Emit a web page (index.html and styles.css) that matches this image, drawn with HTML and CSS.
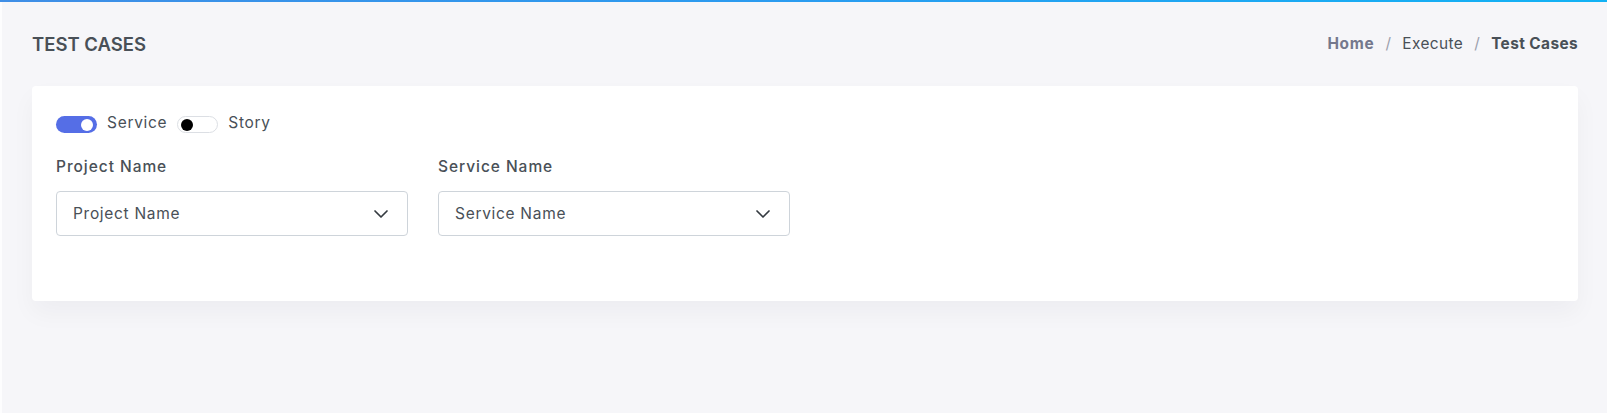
FILE: index.html
```html
<!DOCTYPE html>
<html lang="en">
<head>
<meta charset="utf-8">
<title>Test Cases</title>
<link rel="stylesheet" href="styles.css">
</head>
<body>
<div class="topbar"></div>
<div class="page">
  <div class="page-title-row">
    <h4 class="page-title">TEST CASES</h4>
    <ol class="breadcrumb">
      <li class="crumb crumb-link">Home</li>
      <li class="sep">/</li>
      <li class="crumb">Execute</li>
      <li class="sep">/</li>
      <li class="crumb crumb-active">Test Cases</li>
    </ol>
  </div>
  <div class="card">
    <div class="switch-row">
      <span class="switch switch-on"><span class="knob"></span></span>
      <span class="switch-label">Service</span>
      <span class="switch switch-off"><span class="knob"></span></span>
      <span class="switch-label">Story</span>
    </div>
    <div class="fields">
      <div class="field">
        <label class="field-label">Project Name</label>
        <div class="select">
          <span class="select-text">Project Name</span>
          <svg class="chevron" width="16" height="16" viewBox="0 0 16 16"><path d="M2 5l6 6 6-6" fill="none" stroke="#343a40" stroke-width="1.7" stroke-linecap="round" stroke-linejoin="round"/></svg>
        </div>
      </div>
      <div class="field">
        <label class="field-label">Service Name</label>
        <div class="select">
          <span class="select-text">Service Name</span>
          <svg class="chevron" width="16" height="16" viewBox="0 0 16 16"><path d="M2 5l6 6 6-6" fill="none" stroke="#343a40" stroke-width="1.7" stroke-linecap="round" stroke-linejoin="round"/></svg>
        </div>
      </div>
    </div>
  </div>
</div>
</body>
</html>
```

FILE: styles.css
```css
* { box-sizing: border-box; }
html, body { margin: 0; padding: 0; }
body {
  font-family: "Inter", "Open Sans", sans-serif;
  background: #f6f6f9;
  color: #495057;
  height: 413px;
  overflow: hidden;
}
.topbar {
  height: 2px;
  background: linear-gradient(90deg, #3f8ee6 0%, #2a9cf0 50%, #12b2f4 100%);
}
.page {
  border-left: 2px solid #fdfdfe;
  padding: 0 29px 0 30px;
  height: 411px;
}
.page-title-row {
  display: flex;
  align-items: center;
  justify-content: space-between;
  padding-top: 24px;
  height: 60px;
  margin-bottom: 24px;
}
.page-title {
  margin: 0;
  font-size: 18.5px;
  font-weight: 600;
  line-height: 36px;
  color: #495057;
}
.breadcrumb {
  display: flex;
  align-items: center;
  list-style: none;
  margin: 0;
  padding: 0;
  font-size: 15.4px;
  letter-spacing: 0.4px;
  line-height: 36px;
}
.crumb { color: #495057; }
.crumb-link { color: #74788d; font-weight: 700; letter-spacing: 0.7px; }
.crumb-active { font-weight: 700; color: #495057; letter-spacing: 0.4px; }
.sep { color: #9ca0ad; padding: 0 11px; }
.card {
  background: #fff;
  border-radius: 4px;
  box-shadow: 0 12px 24px rgba(18, 38, 63, 0.04);
  padding: 28px 24px 65px;
}
.switch-row {
  display: flex;
  align-items: flex-start;
  height: 20px;
}
.switch {
  position: relative;
  display: inline-block;
  width: 41px;
  height: 17px;
  border-radius: 9px;
  margin-top: 2px;
}
.switch-on { background: #556ee6; }
.switch-off { background: #fff; border: 1px solid #dcdfe4; }
.knob {
  position: absolute;
  top: 50%;
  width: 12px;
  height: 12px;
  margin-top: -6px;
  border-radius: 50%;
}
.switch-on .knob { right: 4px; background: #fff; }
.switch-off .knob { left: 3px; background: #000; }
.switch-label {
  font-size: 15.5px;
  letter-spacing: 0.7px;
  line-height: 18px;
  margin: 0 10px;
  color: #495057;
}
.fields {
  display: flex;
  gap: 30px;
  margin-top: 22px;
}
.field { width: 352px; }
.field-label {
  display: block;
  font-size: 15.5px;
  letter-spacing: 0.95px;
  line-height: 22px;
  font-weight: 500;
  color: #495057;
  margin-bottom: 13px;
}
.select {
  display: flex;
  align-items: center;
  justify-content: space-between;
  height: 45px;
  border: 1px solid #ced4da;
  border-radius: 4px;
  padding: 0 18px 0 16px;
}
.select-text {
  font-size: 15.5px;
  letter-spacing: 0.7px;
  color: #495057;
}
```
